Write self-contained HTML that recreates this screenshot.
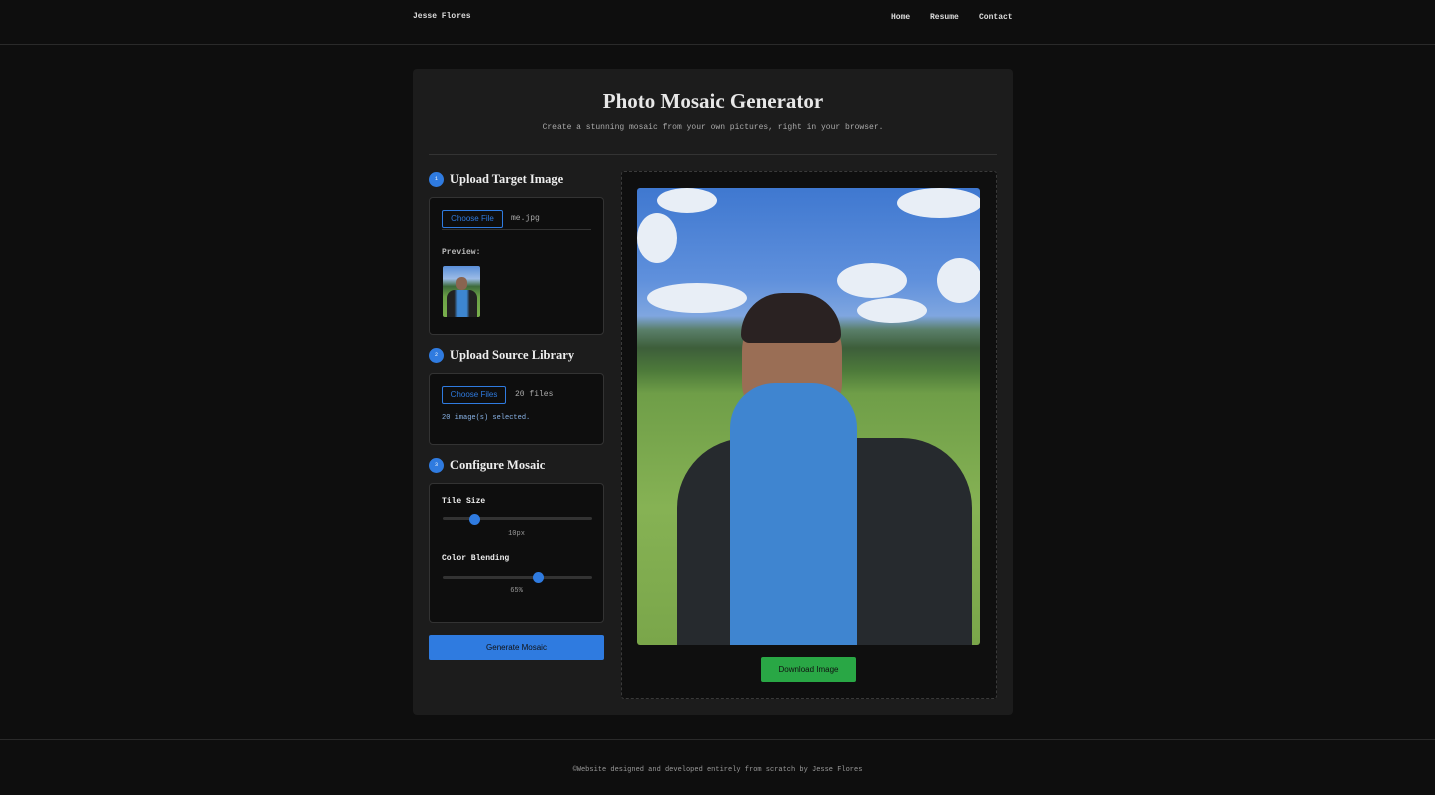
<!DOCTYPE html>
<html><head><style>
*{margin:0;padding:0;box-sizing:border-box}
body{width:1435px;height:795px;background:#0e0e0e;font-family:"Liberation Mono",monospace;color:#ddd;position:relative;overflow:hidden}
.a{position:absolute}
.hdr{left:0;top:0;width:1435px;height:45px;border-bottom:1px solid #2a2a2a}
.nav{font-size:8px;font-weight:bold;color:#ddd}
.card{left:413px;top:69px;width:600px;height:646px;background:#1c1c1c;border-radius:4px}
h1{font-family:"Liberation Serif",serif;font-size:21px;font-weight:bold;color:#e8e8e8}
.step{width:15px;height:15px;border-radius:50%;background:#2f7be0;color:#fff;font-size:5px;text-align:center;line-height:15px}
.st{font-family:"Liberation Serif",serif;font-weight:bold;font-size:12.5px;color:#eee}
.box{background:#0e0e0e;border:1px solid #333;border-radius:4px}
.btn{border:1px solid #2f7be0;color:#2f7be0;font-family:"Liberation Sans",sans-serif;font-size:8px;text-align:center;border-radius:2px}
.sm{font-size:8px}
.track{height:3px;background:#333;border-radius:2px}
.thumb{width:11px;height:11px;border-radius:50%;background:#2f7be0}
.cl{position:absolute;background:#e8eef6;border-radius:50%}
</style></head><body>
<div class="a hdr"></div>
<div class="a nav" style="left:413px;top:12px">Jesse Flores</div>
<div class="a nav" style="left:891px;top:13px">Home</div>
<div class="a nav" style="left:930px;top:13px">Resume</div>
<div class="a nav" style="left:979px;top:13px">Contact</div>
<div class="a card"></div>
<h1 class="a" style="left:413px;width:600px;text-align:center;top:89px">Photo Mosaic Generator</h1>
<div class="a sm" style="left:413px;width:600px;text-align:center;top:123px;color:#aaa">Create a stunning mosaic from your own pictures, right in your browser.</div>
<div class="a" style="left:429px;top:154px;width:568px;height:1px;background:#333"></div>

<div class="a step" style="left:429px;top:172px">1</div>
<div class="a st" style="left:450px;top:172px">Upload Target Image</div>
<div class="a box" style="left:429px;top:197px;width:175px;height:138px"></div>
<div class="a btn" style="left:442px;top:210px;width:61px;height:18px;line-height:16px">Choose File</div>
<div class="a sm" style="left:511px;top:214px;color:#aaa">me.jpg</div>
<div class="a" style="left:442px;top:229px;width:149px;height:1px;background:#333"></div>
<div class="a sm" style="left:442px;top:248px;color:#bbb;font-weight:bold">Preview:</div>
<div class="a" style="left:443px;top:266px;width:37px;height:51px;border-radius:2px;overflow:hidden;background:linear-gradient(#5a8fd8 0,#9bbbe6 25%,#3d6a3a 40%,#6aa046 60%,#7ab04c 100%)"><div class="a" style="left:13px;top:11px;width:11px;height:13px;border-radius:5px;background:#8a6450"></div><div class="a" style="left:4px;top:24px;width:30px;height:30px;background:linear-gradient(90deg,#222 0,#222 25%,#3d86d0 35%,#3d86d0 65%,#222 75%);border-radius:8px 8px 0 0"></div></div>

<div class="a step" style="left:429px;top:348px">2</div>
<div class="a st" style="left:450px;top:348px">Upload Source Library</div>
<div class="a box" style="left:429px;top:373px;width:175px;height:72px"></div>
<div class="a btn" style="left:442px;top:386px;width:64px;height:18px;line-height:16px">Choose Files</div>
<div class="a sm" style="left:515px;top:390px;color:#aaa">20 files</div>
<div class="a" style="left:442px;top:414px;font-size:7px;color:#8ab4e8">20 image(s) selected.</div>

<div class="a step" style="left:429px;top:458px">3</div>
<div class="a st" style="left:450px;top:458px">Configure Mosaic</div>
<div class="a box" style="left:429px;top:483px;width:175px;height:140px"></div>
<div class="a sm" style="left:442px;top:497px;font-weight:bold;color:#eee">Tile Size</div>
<div class="a track" style="left:443px;top:517px;width:149px"></div>
<div class="a thumb" style="left:469px;top:514px"></div>
<div class="a" style="left:429px;width:175px;text-align:center;top:530px;font-size:7px;color:#999">10px</div>
<div class="a sm" style="left:442px;top:554px;font-weight:bold;color:#eee">Color Blending</div>
<div class="a track" style="left:443px;top:576px;width:149px"></div>
<div class="a thumb" style="left:533px;top:572px"></div>
<div class="a" style="left:429px;width:175px;text-align:center;top:587px;font-size:7px;color:#999">65%</div>
<div class="a" style="left:429px;top:635px;width:175px;height:25px;background:#2f7be0;border-radius:2px;color:#111;font-family:'Liberation Sans',sans-serif;font-size:8px;text-align:center;line-height:25px">Generate Mosaic</div>

<div class="a" style="left:621px;top:171px;width:376px;height:528px;border:1px dashed #3a3a3a;background:#0f0f0f;border-radius:3px"></div>
<div class="a" style="left:637px;top:188px;width:343px;height:457px;border-radius:3px;overflow:hidden;background:linear-gradient(#3f78d0 0,#5f90dc 20%,#7fa6e0 28%,#5a7f6a 31%,#3d5e3a 35%,#4d7a3a 40%,#6f9e48 45%,#86b254 70%,#7aa64a 100%)">
<div class="cl" style="left:20px;top:0;width:60px;height:25px"></div>
<div class="cl" style="left:260px;top:0;width:85px;height:30px"></div>
<div class="cl" style="left:0;top:25px;width:40px;height:50px"></div>
<div class="cl" style="left:200px;top:75px;width:70px;height:35px"></div>
<div class="cl" style="left:300px;top:70px;width:45px;height:45px"></div>
<div class="cl" style="left:10px;top:95px;width:100px;height:30px"></div>
<div class="cl" style="left:220px;top:110px;width:70px;height:25px"></div>
<div class="a" style="left:105px;top:115px;width:100px;height:120px;border-radius:48px 48px 40px 40px;background:#9a6e55"></div>
<div class="a" style="left:104px;top:105px;width:100px;height:50px;border-radius:50px 50px 10px 10px;background:#2a2222"></div>
<div class="a" style="left:40px;top:250px;width:295px;height:220px;border-radius:70px 70px 0 0;background:#262a2e"></div>
<div class="a" style="left:93px;top:195px;width:127px;height:270px;border-radius:45px 45px 0 0;background:#3f85d0"></div>
</div>
<div class="a" style="left:761px;top:657px;width:95px;height:25px;background:#29a745;border-radius:2px;color:#111;font-family:'Liberation Sans',sans-serif;font-size:8px;text-align:center;line-height:25px">Download Image</div>

<div class="a" style="left:0;top:739px;width:1435px;height:1px;background:#2a2a2a"></div>
<div class="a" style="left:0;width:1435px;text-align:center;top:766px;font-size:7px;color:#999">©Website designed and developed entirely from scratch by Jesse Flores</div>
</body></html>
